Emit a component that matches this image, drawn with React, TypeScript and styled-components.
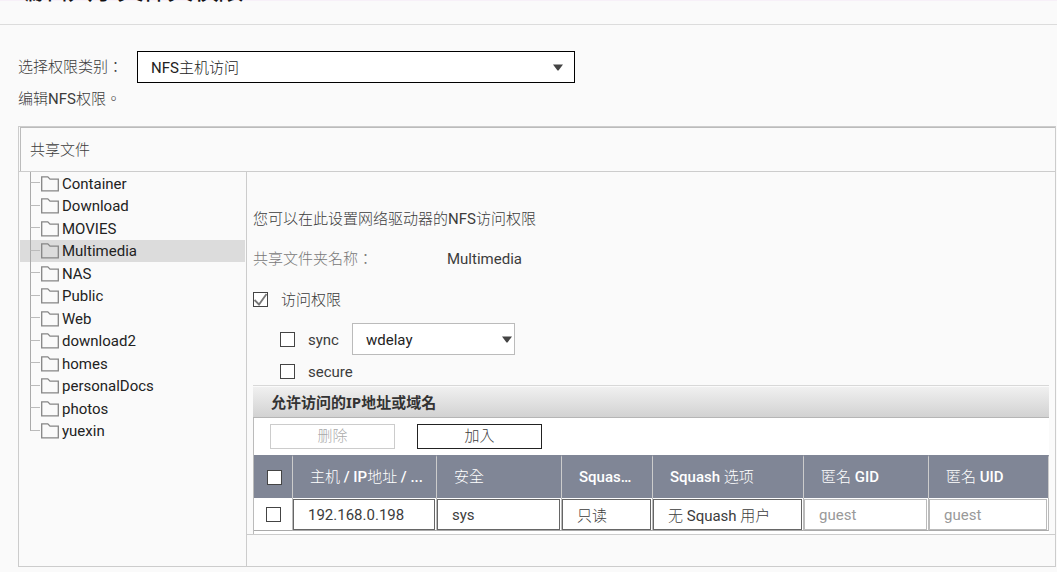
import React from "react";
import styled, { createGlobalStyle } from "styled-components";

const GlobalStyle = createGlobalStyle`
  *, *::before, *::after { box-sizing: border-box; }
  body {
    margin: 0;
    background: #fafafa;
    color: #3c3c3c;
    font: 15px/22px Roboto, "Noto Sans CJK TC Light", "Noto Sans CJK TC", sans-serif;
  }
  button, input, select { font: inherit; color: inherit; margin: 0; }
`;

const TitleBar = styled.header`
  display: flex;
  align-items: flex-end;
  height: 25px;
  padding: 0 18px 15px;
  border-top: 1px solid #f7f0f8;
  border-bottom: 1px solid #dcdcdc;
`;

const Title = styled.h1`
  flex: none;
  margin: 0;
  font-size: 25px;
  line-height: 36px;
  font-weight: 700;
  color: #111;
`;

const Content = styled.main`
  padding: 26px 1px 5px 18px;
`;

const CategoryRow = styled.div`
  display: flex;
  align-items: center;
`;

const CategoryLabel = styled.label`
  width: 119px;
`;

const Hint = styled.p`
  margin: 0 0 11px;
  line-height: 32px;
`;

const SelectBox = styled.span<{ $width: number }>`
  position: relative;
  display: block;
  width: ${(p) => p.$width}px;
`;

const Select = styled.select<{ $edge: string }>`
  appearance: none;
  display: block;
  width: 100%;
  height: 32px;
  padding: 1px 24px 0 13px;
  border: 1px solid ${(p) => p.$edge};
  border-radius: 0;
  background: #fff;
  color: #222;
`;

const Caret = styled.svg<{ $right: number }>`
  position: absolute;
  right: ${(p) => p.$right}px;
  top: 13px;
  pointer-events: none;
`;

const Panel = styled.section`
  border: 1px solid #ccc;
`;

const PanelHead = styled.div`
  padding-left: 1px;
  border-bottom: 1px solid #ccc;
`;

const PanelTitle = styled.h2`
  margin: 0;
  padding: 1px 0 0 9px;
  border-top: 1px solid #bbb;
  border-left: 1px solid #bbb;
  font-size: 15px;
  line-height: 42px;
  font-weight: 400;
`;

const PanelBody = styled.div`
  display: grid;
  grid-template-columns: 228px minmax(0, 1fr);
`;

const TreePane = styled.nav`
  padding: 0 1px;
  border-right: 1px solid #ccc;
`;

const Tree = styled.ul`
  display: grid;
  grid-template-rows: repeat(12, 1fr);
  height: 270px;
  margin: 0;
  padding: 0;
  list-style: none;
`;

const TreeItem = styled.li<{ $selected: boolean }>`
  display: flex;
  align-items: center;
  min-height: 0;
  padding-left: 10px;
  background: ${(p) => (p.$selected ? "#dcdcdc" : "transparent")};
`;

const Branch = styled.span<{ $last: boolean }>`
  display: grid;
  grid-template-rows: 1fr 1fr;
  align-self: stretch;
  width: 10px;
  &::before {
    content: "";
    border-left: 1px solid #aaa;
    border-bottom: 1px solid #bbb;
  }
  &::after {
    content: "";
    border-left: ${(p) => (p.$last ? "0" : "1px solid #aaa")};
  }
`;

const TreeButton = styled.button`
  display: flex;
  align-items: center;
  gap: 3px;
  height: 22px;
  padding: 1px 4px 0 1px;
  border: 0;
  background: transparent;
  color: #222;
`;

const Detail = styled.div`
  min-width: 0;
  padding-bottom: 31px;
`;

const DetailInner = styled.div`
  padding: 27px 6px 0;
  border-bottom: 1px solid #ccc;
`;

const Line = styled.div<{ $height: number; $indent?: boolean }>`
  display: flex;
  align-items: center;
  height: ${(p) => p.$height}px;
  padding-left: ${(p) => (p.$indent ? 27 : 0)}px;
`;

const Description = styled.p`
  margin: 0;
`;

const FieldName = styled.span`
  width: 194px;
  color: #777;
`;

const TickLabel = styled.label`
  min-width: 57px;
  padding: 1px 0 0 13px;
`;

const TickBox = styled.span`
  position: relative;
  display: block;
  flex: none;
  width: 15px;
  height: 15px;
`;

const Tick = styled.input`
  appearance: none;
  display: block;
  width: 15px;
  height: 15px;
  border: 1px solid #444;
  background: #fff;
`;

const TickMark = styled.svg`
  position: absolute;
  inset: 0;
  pointer-events: none;
`;

const HostPanel = styled.section`
  border-top: 1px solid #d8d8d8;
`;

const HostTitle = styled.h3`
  margin: 0;
  padding-left: 18px;
  border-top: 1px solid #fafafa;
  border-bottom: 1px solid #b5b5b5;
  background: linear-gradient(#f0f0f0, #d2d2d2);
  color: #333;
  font: 700 15px/30px "Noto Sans", "Noto Sans CJK TC", sans-serif;
`;

const HostBody = styled.div`
  padding-bottom: 3px;
  border-left: 1px solid #bbb;
  background: #fff;
`;

const Toolbar = styled.div`
  display: flex;
  gap: 22px;
  padding: 6px 16px;
`;

const ToolButton = styled.button`
  width: 125px;
  height: 25px;
  padding: 0 0 2px;
  border: 1px solid #222;
  background: #fff;
  line-height: 20px;
  &:disabled {
    border-color: #ccc;
    color: #aaa;
  }
`;

const HostTable = styled.table`
  width: 100%;
  table-layout: fixed;
  border-collapse: separate;
  border-spacing: 0;
`;

const HeadCell = styled.th<{ $width?: number; $tick?: boolean }>`
  width: ${(p) => (p.$width ? `${p.$width}px` : "auto")};
  height: 43px;
  padding: ${(p) => (p.$tick ? "0 0 0 13px" : "0 0 2px 17px")};
  border-top: 2px solid #808696;
  border-right: 1px solid #ccc;
  background: #808696;
  color: #fff;
  font-weight: 500;
  text-align: left;
  white-space: nowrap;
`;

const Cell = styled.td<{ $tick?: boolean }>`
  height: 33px;
  padding: ${(p) => (p.$tick ? "1px 0 0 12px" : "1px 1px 0 0")};
  border-right: 1px solid #bbb;
  border-bottom: 1px solid #aaa;
`;

const CellInput = styled.input`
  display: block;
  width: 100%;
  height: 31px;
  padding: 0 4px 0 14px;
  border: 1px solid #666;
  border-radius: 0;
  background: #fff;
  &:disabled {
    border-color: #bbb;
    color: #999;
  }
`;

const folders = [
  "Container", "Download", "MOVIES", "Multimedia", "NAS", "Public",
  "Web", "download2", "homes", "personalDocs", "photos", "yuexin",
];

const columns = [
  { title: "主机 / IP地址 / ...", width: 144, value: "192.168.0.198" },
  { title: "安全", width: 125, value: "sys" },
  { title: "Squas…", width: 91, value: "只读" },
  { title: "Squash 选项", width: 151, value: "无 Squash 用户" },
  { title: "匿名 GID", width: 125, value: "guest", disabled: true },
  { title: "匿名 UID", value: "guest", disabled: true },
];

const FolderIcon = () => (
  <svg width="18" height="16" viewBox="0 0 18 16" fill="none" stroke="#858585" strokeWidth="1.3" aria-hidden="true">
    <path d="M0.7 14.8V0.9H6.8L9 3.2H17.3V14.8Z" />
  </svg>
);

const Arrow = ({ right }: { right: number }) => (
  <Caret $right={right} width="10" height="7" viewBox="0 0 10 7" aria-hidden="true">
    <path d="M0 0.5H10L5.5 6.5H4.5Z" fill="#444" />
  </Caret>
);

export default function App() {
  return (
    <>
      <GlobalStyle />
      <TitleBar>
        <Title>编辑共享文件夹权限</Title>
      </TitleBar>
      <Content>
        <CategoryRow>
          <CategoryLabel htmlFor="category">选择权限类别：</CategoryLabel>
          <SelectBox $width={438}>
            <Select id="category" $edge="#000">
              <option>NFS主机访问</option>
            </Select>
            <Arrow right={12} />
          </SelectBox>
        </CategoryRow>
        <Hint>编辑NFS权限。</Hint>

        <Panel>
          <PanelHead>
            <PanelTitle>共享文件</PanelTitle>
          </PanelHead>
          <PanelBody>
            <TreePane aria-label="共享文件">
              <Tree>
                {folders.map((name, i) => (
                  <TreeItem key={name} $selected={name === "Multimedia"}>
                    <Branch $last={i === folders.length - 1} />
                    <TreeButton type="button">
                      <FolderIcon />
                      {name}
                    </TreeButton>
                  </TreeItem>
                ))}
              </Tree>
            </TreePane>

            <Detail>
              <DetailInner>
                <Line $height={40}>
                  <Description>您可以在此设置网络驱动器的NFS访问权限</Description>
                </Line>
                <Line $height={40}>
                  <FieldName>共享文件夹名称：</FieldName>
                  <span>Multimedia</span>
                </Line>
                <Line $height={41}>
                  <TickBox>
                    <Tick id="access" type="checkbox" defaultChecked />
                    <TickMark width="15" height="15" viewBox="0 0 15 15" fill="none" stroke="#777" strokeWidth="1.8" aria-hidden="true">
                      <path d="M1.5 8L6 12.5L13.5 2" />
                    </TickMark>
                  </TickBox>
                  <TickLabel htmlFor="access">访问权限</TickLabel>
                </Line>
                <Line $height={38} $indent>
                  <Tick id="sync" type="checkbox" />
                  <TickLabel htmlFor="sync">sync</TickLabel>
                  <SelectBox $width={163}>
                    <Select aria-label="sync" $edge="#bbb">
                      <option>wdelay</option>
                    </Select>
                    <Arrow right={3} />
                  </SelectBox>
                </Line>
                <Line $height={27} $indent>
                  <Tick id="secure" type="checkbox" />
                  <TickLabel htmlFor="secure">secure</TickLabel>
                </Line>

                <HostPanel>
                  <HostTitle>允许访问的IP地址或域名</HostTitle>
                  <HostBody>
                    <Toolbar>
                      <ToolButton type="button" disabled>删除</ToolButton>
                      <ToolButton type="button">加入</ToolButton>
                    </Toolbar>
                    <HostTable>
                      <thead>
                        <tr>
                          <HeadCell $width={39} $tick>
                            <Tick type="checkbox" aria-label="全选" />
                          </HeadCell>
                          {columns.map((c) => (
                            <HeadCell key={c.title} $width={c.width}>{c.title}</HeadCell>
                          ))}
                        </tr>
                      </thead>
                      <tbody>
                        <tr>
                          <Cell $tick>
                            <Tick type="checkbox" aria-label="192.168.0.198" />
                          </Cell>
                          {columns.map((c) => (
                            <Cell key={c.title}>
                              <CellInput aria-label={c.title} defaultValue={c.value} disabled={c.disabled} />
                            </Cell>
                          ))}
                        </tr>
                      </tbody>
                    </HostTable>
                  </HostBody>
                </HostPanel>
              </DetailInner>
            </Detail>
          </PanelBody>
        </Panel>
      </Content>
    </>
  );
}
